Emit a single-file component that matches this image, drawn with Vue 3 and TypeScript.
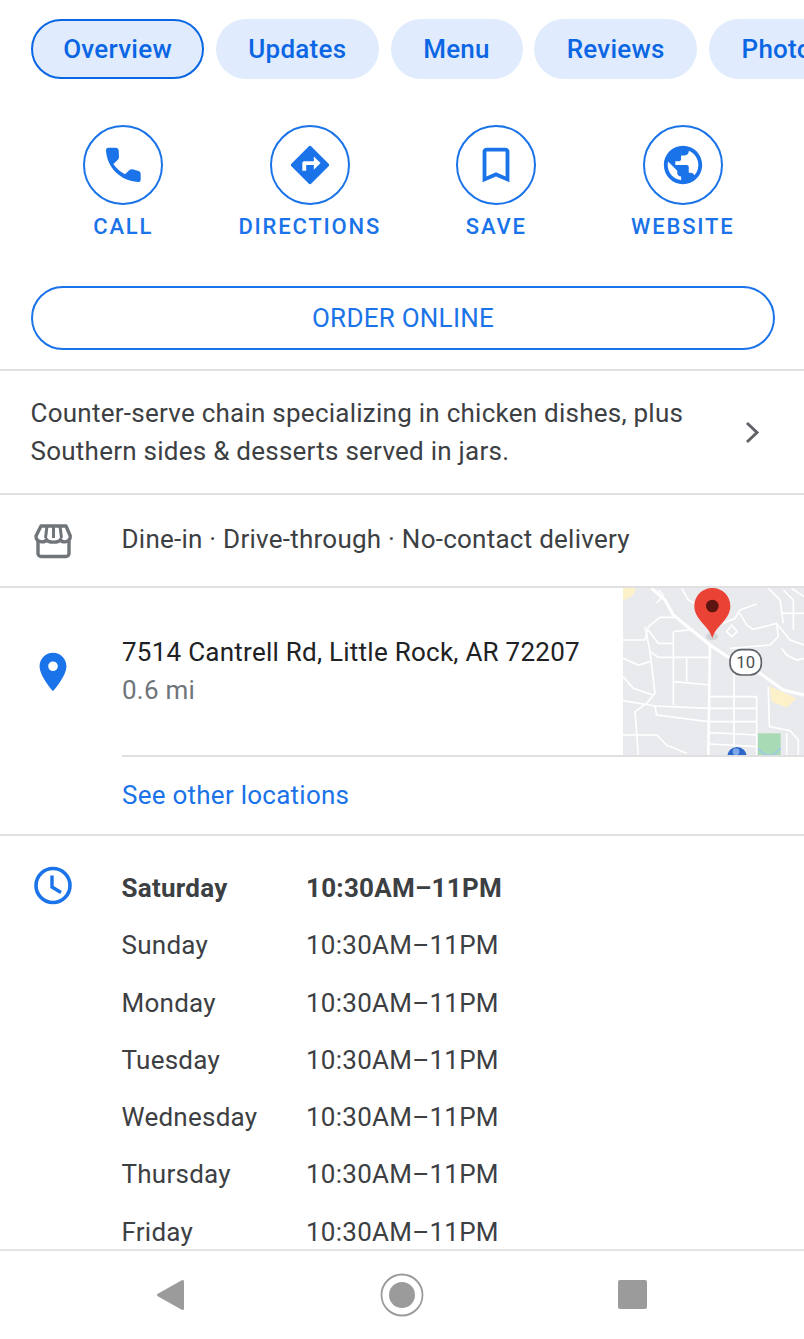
<script setup lang="ts">
const tabs = ['Overview', 'Updates', 'Menu', 'Reviews', 'Photos']

const actions = [
  { label: 'CALL', box: '300 425 138 138', path: 'M325 442H348Q355 443 356 450L357 470Q357 476 352 480L340 491Q355 512 375 522L386 511Q390 507 397 507L416 512Q422 514 422 520V538Q422 545 414 545C360 542 320 500 318 450Q318 442 325 442Z' },
  { label: 'DIRECTIONS', box: '0 0 24 24', path: 'M21.71 11.29l-9-9c-.39-.39-1.02-.39-1.41 0l-9 9c-.39.39-.39 1.02 0 1.41l9 9c.39.39 1.02.39 1.41 0l9-9c.39-.38.39-1.01 0-1.41zM14 14.5V12h-4v3H8v-4c0-.55.45-1 1-1h5V7.5l3.5 3.5-3.5 3.5z' },
  { label: 'SAVE', box: '0 0 24 24', path: 'M17 3H7c-1.1 0-1.99.9-1.99 2L5 21l7-3 7 3V5c0-1.1-.9-2-2-2zm0 15l-5-2.18L7 18V5h10v13z' },
  { label: 'WEBSITE', box: '0 0 24 24', path: 'M12 2C6.48 2 2 6.48 2 12s4.48 10 10 10 10-4.48 10-10S17.52 2 12 2zm-1 17.93c-3.95-.49-7-3.85-7-7.93 0-.62.08-1.21.21-1.79L9 15v1c0 1.1.9 2 2 2v1.93zm6.9-2.54c-.26-.81-1-1.39-1.9-1.39h-1v-3c0-.55-.45-1-1-1H8v-2h2c.55 0 1-.45 1-1V7h2c1.1 0 2-.9 2-2v-.41c2.93 1.19 5 4.06 5 7.41 0 2.08-.8 3.97-2.1 5.39z' },
]

const hours = ['Saturday', 'Sunday', 'Monday', 'Tuesday', 'Wednesday', 'Thursday', 'Friday']

// road lines, in the coordinates of the map's viewBox
const roads = [
  'M39 180H105L115 140L150 112H195',
  'M105 140L120 215L135 340L110 370L75 395L85 525',
  'M145 30L160 45L140 70',
  'M215 25L235 60L285 85',
  'M115 150L145 190H190',
  'M190 155V375',
  'M190 155L250 148',
  'M39 235L85 255L120 245',
  'M120 215L145 232H300',
  'M230 235V305',
  'M190 305L300 315',
  'M39 290L70 325L130 345',
  'M39 362L135 378L300 385H440',
  'M135 378L140 405L295 425',
  'M300 350H440',
  'M300 425H440',
  'M300 458L440 465',
  'M300 492L440 500',
  'M372 250V525',
  'M440 350V525',
  'M475 320L478 440L540 452L565 480V525',
  'M530 460V525',
  'M39 465L140 465L170 495L230 520',
  'M340 130L375 115L390 90L440 72',
  'M390 100L410 135L430 148L500 130L540 180L582 195',
  'M500 130L505 170L480 195L360 205',
  'M475 25L510 60L520 130',
  'M520 30L550 60V150',
  'M515 100H582',
  'M545 25L582 50',
  'M515 205L530 225L560 240L582 235',
  'M350 155L365 135L382 155L365 170Z',
]
</script>

<template>
  <div class="page">
    <div class="content">
      <div class="tabs">
        <div v-for="(tab, idx) in tabs" :key="tab" class="tab" :class="{ active: idx === 0 }">{{ tab }}</div>
      </div>

      <div class="actions">
        <div v-for="a in actions" :key="a.label" class="action">
          <div class="action-circle">
            <svg width="46" height="46" :viewBox="a.box"><path :d="a.path" fill="#1a73e8" /></svg>
          </div>
          <div class="action-label">{{ a.label }}</div>
        </div>
      </div>

      <div class="order-wrap">
        <div class="order-btn">ORDER ONLINE</div>
      </div>

      <div class="desc">
        <div class="desc-text">Counter-serve chain specializing in chicken dishes, plus Southern sides &amp; desserts served in jars.</div>
        <svg class="chevron" width="18" height="24" viewBox="0 0 18 24">
          <path d="M3 3L13 12.5L3 22" fill="none" stroke="#5f6368" stroke-width="3" />
        </svg>
      </div>

      <div class="services">
        <div class="icon-col store-col">
          <svg width="40" height="38" viewBox="0 0 40 38">
            <path d="M5 19V31.500a3 3 0 0 0 3 3H33a3 3 0 0 0 3-3V19" fill="none" stroke="#70757a" stroke-width="3.4" />
            <path d="M8 4H33L37.300 14C37.300 21 29 21 27.500 17.500C26 21 15 21 13.500 17.500C12 21 3 21 3 14Z" fill="none" stroke="#70757a" stroke-width="3.400" stroke-linejoin="round" />
            <path d="M14 4L12.500 16M20.500 4V16M27 4L28.500 16" fill="none" stroke="#70757a" stroke-width="3" />
          </svg>
        </div>
        <div class="row-text">Dine-in · Drive-through · No-contact delivery</div>
      </div>

      <div class="address">
        <div class="address-main">
          <div class="icon-col pin-col">
            <svg width="46" height="46" viewBox="0 0 24 24">
              <path d="M12 2C8.130 2 5 5.130 5 9c0 5.250 7 13 7 13s7-7.750 7-13c0-3.870-3.130-7-7-7zm0 9.500a2.500 2.500 0 0 1 0-5 2.500 2.500 0 0 1 0 5z" fill="#1a73e8" />
            </svg>
          </div>
          <div class="address-text">
            <div class="address-line">7514 Cantrell Rd, Little Rock, AR 72207</div>
            <div class="distance">0.6 mi</div>
          </div>
          <svg class="map" width="181" height="167" viewBox="39 24 543 501">
            <rect x="39" y="24" width="543" height="501" fill="#e8eaed" />
            <path d="M39 24H78L70 45L39 62Z" fill="#fdf1c9" />
            <path d="M478 318L558 355L530 383L485 365Z" fill="#fdf1c9" />
            <rect x="443" y="460" width="69" height="65" fill="#a8dab5" />
            <path d="M443 505L465 525H490L512 505" fill="none" stroke="#9cc4f0" stroke-width="4" />
            <path v-for="(d, idx) in roads" :key="idx" :d="d" fill="none" stroke="#fff" stroke-width="5" />
            <path d="M125 25L165 60L190 105L300 195L360 235L450 280L520 330L582 345" fill="none" stroke="#fff" stroke-width="9" />
            <path d="M300 195L295 525" fill="none" stroke="#fff" stroke-width="8" />
            <ellipse cx="306" cy="170" rx="18" ry="11" fill="#c9cbce" opacity="0.7" />
            <circle cx="381" cy="530" r="29" fill="#2b66c9" />
            <circle cx="378" cy="515" r="10" fill="#7fa8ea" />
            <rect x="360" y="209" width="94" height="76" rx="34" fill="#fff" stroke="#5f6368" stroke-width="5" />
            <text x="407" y="264" text-anchor="middle" class="shield">10</text>
            <path d="M307 24C276 24 253 48 253 78C253 120 296 135 307 175C318 135 361 120 361 78C361 48 338 24 307 24Z" fill="#ea4335" />
            <circle cx="307" cy="78" r="19" fill="#5c1510" />
          </svg>
        </div>
        <div class="address-rule"></div>
        <div class="other-link">See other locations</div>
      </div>

      <div class="hours">
        <div class="icon-col clock-col">
          <svg width="40" height="40" viewBox="0 0 40 40">
            <circle cx="20" cy="19.500" r="17" fill="none" stroke="#1a73e8" stroke-width="3.600" />
            <path d="M19 9.500V21L28 26.500" fill="none" stroke="#1a73e8" stroke-width="3.400" />
          </svg>
        </div>
        <div class="hours-list">
          <div v-for="(day, idx) in hours" :key="day" class="hours-row" :class="{ today: idx === 0 }">
            <span class="day">{{ day }}</span>
            <span>10:30AM–11PM</span>
          </div>
        </div>
      </div>
    </div>

    <div class="navbar">
      <svg width="32" height="34" viewBox="0 0 32 34">
        <path d="M28.500 3.500V30.500L4.500 17Z" fill="#9b9b9b" stroke="#9b9b9b" stroke-width="3" stroke-linejoin="round" />
      </svg>
      <svg width="44" height="44" viewBox="0 0 44 44">
        <circle cx="22" cy="22" r="20.500" fill="none" stroke="#9b9b9b" stroke-width="1.800" />
        <circle cx="22" cy="22" r="13" fill="#9b9b9b" />
      </svg>
      <div class="nav-square"></div>
    </div>
  </div>
</template>

<style scoped>
.page {
  width: 804px;
  height: 1339px;
  display: flex;
  flex-direction: column;
  overflow: hidden;
  background: #fff;
  font-family: Roboto, 'Liberation Sans', sans-serif;
  font-size: 26px;
  letter-spacing: 0.25px;
  color: #3c4043;
}
.content {
  flex: 1;
  min-height: 0;
  overflow: hidden;
}

/* tabs */
.tabs {
  display: flex;
  gap: 11.5px;
  padding: 19px 0 0 31px;
  overflow: hidden;
}
.tab {
  flex-shrink: 0;
  height: 60px;
  line-height: 60px;
  padding: 0 32.700px;
  border-radius: 30px;
  background: #e0ecfd;
  color: #0b66e4;
  font-weight: 500;
  box-sizing: border-box;
}
.tab.active {
  border: 2.500px solid #0b66e4;
  line-height: 56px;
  padding: 0 30.200px;
}

/* action buttons */
.actions {
  display: grid;
  grid-template-columns: repeat(4, 186.500px);
  padding: 46px 0 0 30px;
}
.action {
  display: flex;
  flex-direction: column;
  align-items: center;
}
.action-circle {
  width: 80px;
  height: 80px;
  box-sizing: border-box;
  border: 2px solid #1a73e8;
  border-radius: 50%;
  display: flex;
  align-items: center;
  justify-content: center;
}
.action-label {
  margin-top: 8px;
  height: 28px;
  line-height: 28px;
  font-size: 22px;
  font-weight: 500;
  letter-spacing: 1.800px;
  color: #1a73e8;
}

/* order button */
.order-wrap {
  padding: 45px 29px 19px 31px;
  border-bottom: 2px solid #e0e0e0;
}
.order-btn {
  height: 64px;
  box-sizing: border-box;
  border: 2px solid #1a73e8;
  border-radius: 32px;
  display: flex;
  align-items: center;
  justify-content: center;
  color: #1a73e8;
}

/* description */
.desc {
  display: flex;
  align-items: center;
  justify-content: space-between;
  padding: 23px 40px 23px 30.500px;
  border-bottom: 2px solid #e0e0e0;
}
.desc-text {
  width: 670px;
  line-height: 38px;
}
.chevron {
  margin-right: 2px;
}

/* rows with a left icon */
.icon-col {
  width: 122px;
  flex-shrink: 0;
  padding-left: 33px;
  box-sizing: border-box;
  display: flex;
}
.services {
  display: flex;
  align-items: center;
  height: 91px;
  border-bottom: 2px solid #e0e0e0;
}
.row-text {
  line-height: 38px;
  margin-top: -3px;
  margin-left: -0.500px;
}

/* address */
.address {
  border-bottom: 2px solid #e0e0e0;
}
.address-main {
  display: flex;
  height: 167px;
}
.pin-col {
  padding-left: 30px;
  padding-top: 61px;
}
.address-text {
  flex: 1;
  padding-top: 45px;
}
.address-line {
  line-height: 38px;
  color: #202124;
}
.distance {
  line-height: 38px;
  color: #70757a;
}
.map {
  display: block;
  flex-shrink: 0;
}
.shield {
  font-family: Roboto, sans-serif;
  font-size: 50px;
  letter-spacing: 0;
  fill: #4a4d50;
}
.address-rule {
  height: 2px;
  margin-left: 122px;
  background: #e0e0e0;
}
.other-link {
  padding-left: 122px;
  height: 77px;
  line-height: 77px;
  color: #1a73e8;
}

/* hours */
.hours {
  display: flex;
  padding-top: 24px;
}
.clock-col {
  padding-left: 33px;
  padding-top: 6px;
}
.hours-list {
  flex: 1;
  margin-left: -0.500px;
}
.hours-row {
  display: flex;
  height: 57.300px;
  line-height: 57.300px;
}
.hours-row.today {
  font-weight: 700;
}
.day {
  width: 184.500px;
}

/* android nav bar */
.navbar {
  flex-shrink: 0;
  height: 90px;
  box-sizing: border-box;
  border-top: 2px solid #e4e4e4;
  display: flex;
  align-items: center;
  justify-content: space-between;
  padding: 0 157px 1px 154px;
}
.nav-square {
  width: 29px;
  height: 29px;
  border-radius: 2px;
  background: #9b9b9b;
}
</style>
